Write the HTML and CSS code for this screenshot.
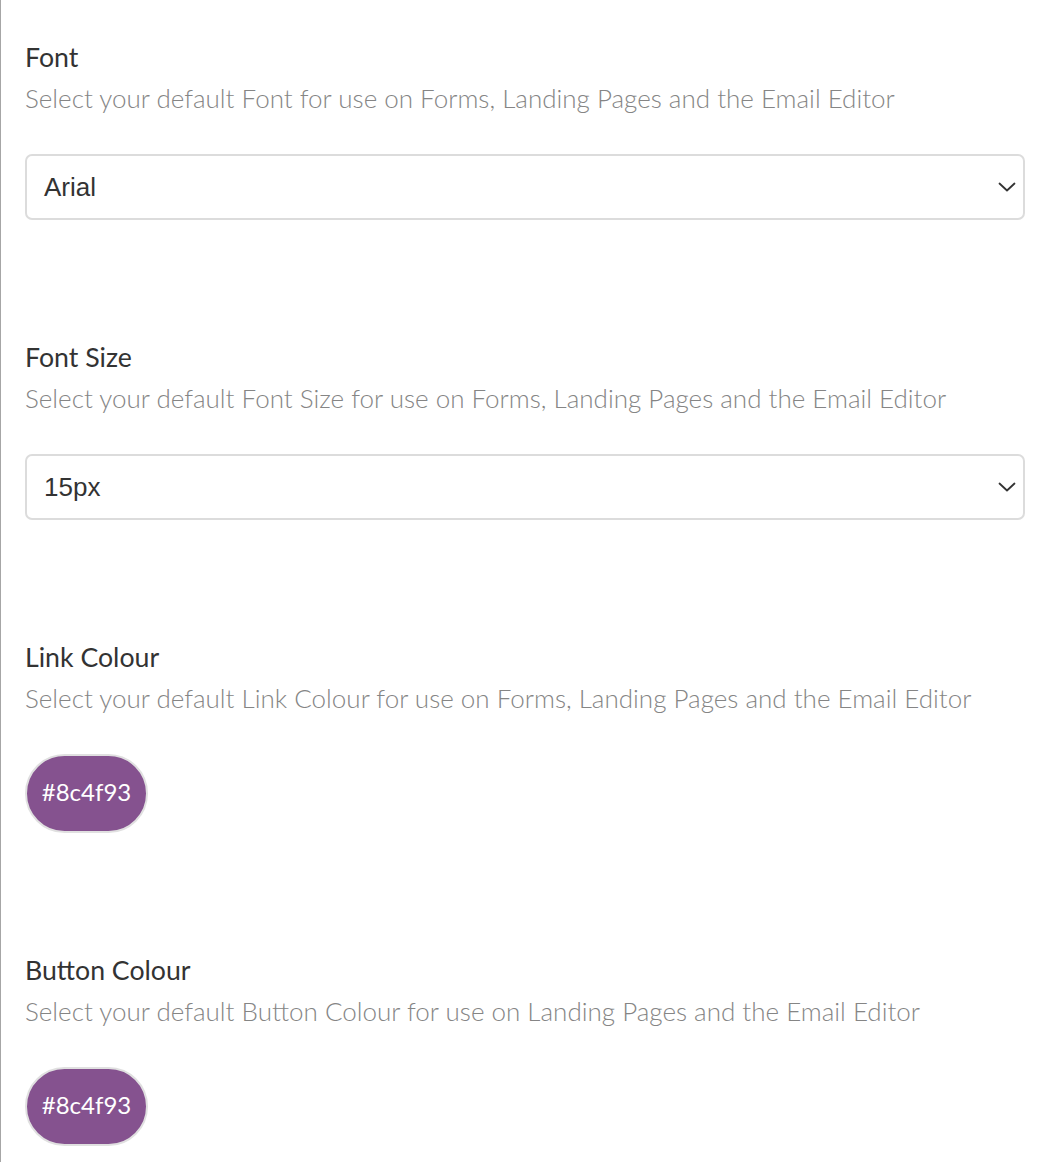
FILE: index.html
```html
<!DOCTYPE html>
<html lang="en">
<head>
<meta charset="utf-8">
<title>Defaults</title>
<link rel="stylesheet" href="styles.css">
</head>
<body>
<div class="page">
  <section class="field">
    <h3 class="label">Font</h3>
    <p class="hint">Select your default Font for use on Forms, Landing Pages and the Email Editor</p>
    <div class="select">
      <span class="value">Arial</span>
      <svg class="chev" width="18" height="10" viewBox="0 0 18 10"><path d="M1.5 1.5 L9 8.5 L16.5 1.5" fill="none" stroke="#333" stroke-width="1.8" stroke-linecap="round" stroke-linejoin="round"/></svg>
    </div>
  </section>
  <section class="field">
    <h3 class="label">Font Size</h3>
    <p class="hint">Select your default Font Size for use on Forms, Landing Pages and the Email Editor</p>
    <div class="select">
      <span class="value">15px</span>
      <svg class="chev" width="18" height="10" viewBox="0 0 18 10"><path d="M1.5 1.5 L9 8.5 L16.5 1.5" fill="none" stroke="#333" stroke-width="1.8" stroke-linecap="round" stroke-linejoin="round"/></svg>
    </div>
  </section>
  <section class="field">
    <h3 class="label">Link Colour</h3>
    <p class="hint">Select your default Link Colour for use on Forms, Landing Pages and the Email Editor</p>
    <div class="swatch">#8c4f93</div>
  </section>
  <section class="field">
    <h3 class="label">Button Colour</h3>
    <p class="hint">Select your default Button Colour for use on Landing Pages and the Email Editor</p>
    <div class="swatch">#8c4f93</div>
  </section>
</div>
</body>
</html>
```
FILE: styles.css
```css
html, body {
  margin: 0;
  padding: 0;
  background: #fff;
}
body {
  font-family: Lato, "Open Sans", sans-serif;
}
.page {
  box-sizing: border-box;
  min-height: 100vh;
  border-left: 1px solid #a6a6a6;
  padding: 39px 21px 0 24px;
  display: flex;
  flex-direction: column;
  gap: 119px;
}
.field {
  display: flex;
  flex-direction: column;
  align-items: flex-start;
}
.label {
  margin: 0;
  font-size: 26.7px;
  font-weight: 400;
  line-height: 36px;
  color: #333;
}
.hint {
  margin: 5px 0 38px;
  font-size: 26px;
  font-weight: 300;
  line-height: 36px;
  color: #858585;
}
.select {
  box-sizing: border-box;
  align-self: stretch;
  height: 66px;
  border: 2px solid #dcdcdc;
  border-radius: 7px;
  display: flex;
  align-items: center;
  justify-content: space-between;
  padding: 0 7px 0 17px;
}
.value {
  font-family: "Liberation Sans", Arial, sans-serif;
  font-size: 26px;
  color: #333;
}
.chev {
  display: block;
}
.swatch {
  box-sizing: border-box;
  width: 123px;
  height: 79px;
  border: 2px solid #e0e0e0;
  border-radius: 40px;
  background: #85528f;
  color: #fff;
  font-size: 24px;
  line-height: 1;
  padding-bottom: 3px;
  display: flex;
  align-items: center;
  justify-content: center;
}
```
